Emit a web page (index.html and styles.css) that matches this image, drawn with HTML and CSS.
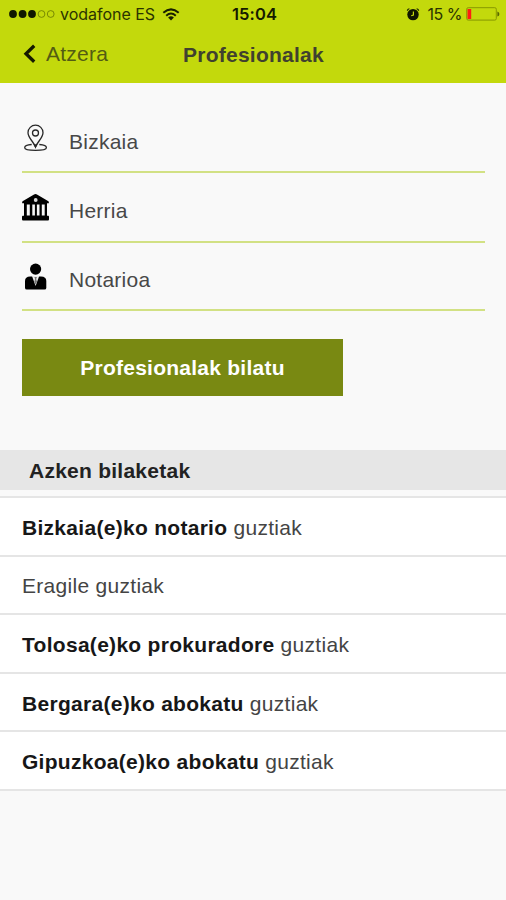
FILE: index.html
```html
<!DOCTYPE html>
<html lang="eu">
<head>
<meta charset="utf-8">
<title>Profesionalak</title>
<link rel="stylesheet" href="styles.css">
</head>
<body>
<header class="top">
  <div class="status">
    <div class="carrier">
      <svg class="signal" width="46" height="10" viewBox="0 0 46 10"><g fill="#111800"><circle cx="4" cy="5" r="3.9"/><circle cx="13.6" cy="5" r="3.9"/><circle cx="23" cy="5" r="3.9"/></g><g fill="none" stroke="#667600" stroke-width=".8"><circle cx="32.5" cy="5" r="3.4"/><circle cx="41.7" cy="5" r="3.4"/></g></svg>
      <span class="network">vodafone ES</span>
      <svg class="wifi" width="18" height="13" viewBox="0 0 18 13"><g fill="none" stroke="#182000" stroke-width="2"><path d="M1.3 4.7Q9-2 16.7 4.7"/><path d="M4.2 7.7Q9 3.4 13.8 7.7"/></g><path d="M6.1 9.4Q9 7.2 11.9 9.4L9 12.4z" fill="#182000"/></svg>
    </div>
    <div class="clock">15:04</div>
    <div class="power">
      <svg width="14" height="15" viewBox="0 0 14 15"><circle cx="7" cy="7.6" r="5.7" fill="#101600"/><path d="M1.3 3.8Q1.5 2 3.4 1.8M12.7 3.8Q12.5 2 10.6 1.8" fill="none" stroke="#101600" stroke-width="1.1"/><path d="M7.4 4.4V8L5.2 8.7" fill="none" stroke="#c3d90c" stroke-width="1.2"/></svg>
      <span class="percent">15 %</span>
      <svg width="34" height="14" viewBox="0 0 34 14"><rect x=".7" y=".7" width="29.6" height="12.4" rx="1.5" fill="none" stroke="#879800"/><path d="M1.5 2H5.2V12H1.5z" fill="#ff1d12"/><path d="M31.4 4.5Q33.4 5 33.4 7T31.4 9.5z" fill="#586600"/></svg>
    </div>
  </div>
  <nav class="nav">
    <div class="back"><svg width="14" height="20" viewBox="0 0 14 20"><path d="M12.2 1.7L4 9.7L12.2 17.7" fill="none" stroke="#151900" stroke-width="3.3"/></svg><span>Atzera</span></div>
    <h1>Profesionalak</h1>
  </nav>
</header>
<main>
  <section class="form">
    <div class="field first">
      <svg width="28" height="28" viewBox="0 0 28 28"><g fill="none" stroke="#292929" stroke-width="1.3"><path d="M13.5 23C11.8 18 6 13.8 6 8.7a7.5 7.5 0 0 1 15 0C21 13.8 15.2 18 13.5 23z"/><circle cx="13.5" cy="9" r="3"/><path d="M9.7 20.5C5 20.8 2.7 22.1 2.7 23.7C2.7 25.4 7 26.3 13.5 26.3S24.4 25.4 24.4 23.7C24.4 22.1 22 20.8 17.3 20.5"/></g><path d="M11.2 20.3L13.5 24L15.8 20.3z" fill="#292929"/></svg>
      <span>Bizkaia</span>
    </div>
    <div class="field second">
      <svg width="28" height="28" viewBox="0 0 28 28"><path d="M13.5 0Q14.3 0 15.4.8L26 7Q27.1 7.6 26.8 9.2H25V21.7H26.4Q27 21.8 27 23V25.2Q27 26.4 26 26.4H1Q0 26.4 0 25.2V23Q0 21.8.8 21.7H2V9.2H.2Q-.1 7.6 1 7L11.6.8Q12.8 0 13.5 0z" fill="#000"/><path d="M4.8 10.5H7.8V21.6H4.8zM10.3 10.5H12.9V21.6H10.3zM14.9 10.5H17.5V21.6H14.9zM19.8 10.5H22.7V21.6H19.8z" fill="#f5f5f5"/><circle cx="13.7" cy="6" r="1.9" fill="#d8d8d8"/></svg>
      <span>Herria</span>
    </div>
    <div class="field third">
      <svg width="28" height="28" viewBox="0 0 28 28"><circle cx="13.6" cy="7.1" r="5.6" fill="#000"/><path d="M3 25.7V19Q3 14.4 8.2 14.4H19Q24.3 14.4 24.3 19V25.7Q24.3 27.6 22.5 27.6H4.8Q3 27.6 3 25.7z" fill="#000"/><path d="M10 14H17.2L13.6 24z" fill="#eee"/><path d="M12.4 15H14.9L14.2 16.9L15 19.7L13.6 22.5L12.3 19.7L13.1 16.9z" fill="#777"/></svg>
      <span>Notarioa</span>
    </div>
    <button class="search">Profesionalak bilatu</button>
  </section>
  <h2>Azken bilaketak</h2>
  <ul class="recent">
    <li><span><b>Bizkaia(e)ko notario</b> guztiak</span></li>
    <li><span>Eragile guztiak</span></li>
    <li><span><b>Tolosa(e)ko prokuradore</b> guztiak</span></li>
    <li><span><b>Bergara(e)ko abokatu</b> guztiak</span></li>
    <li><span><b>Gipuzkoa(e)ko abokatu</b> guztiak</span></li>
  </ul>
</main>
</body>
</html>
```
FILE: styles.css
```css
* { box-sizing: border-box; }
body {
  margin: 0;
  min-height: 900px;
  background: #f9f9f9;
  color: #181818;
  font: 21px/24px "Liberation Sans", Arial, sans-serif;
  letter-spacing: .25px;
}
svg { display: block; flex: none; }
.top { height: 83px; background: #c3d90c; }
.status {
  height: 28px;
  display: grid;
  grid-template-columns: 1fr auto 1fr;
  align-items: center;
  padding: 0 6px 0 9px;
  font: 16px/20px Inter, sans-serif;
  color: #2b3300;
}
.carrier, .power { display: flex; align-items: center; }
.network { margin: 0 7px 0 5px; letter-spacing: -.02px; }
.clock { font-weight: 600; font-size: 16.5px; letter-spacing: .1px; color: #151b00; }
.power { justify-content: flex-end; }
.percent { margin: 0 4px 0 8px; letter-spacing: -.5px; }
.nav {
  height: 55px;
  display: grid;
  grid-template-columns: 1fr auto 1fr;
  align-items: center;
  padding: 0 0 3px 22px;
}
.back { display: flex; align-items: center; gap: 10px; color: #535c13; }
h1 { margin: 2px 21px 0 0; font-size: 21px; line-height: 24px; color: #40412f; }
.form { height: 367px; padding: 20px 21px 0 22px; }
.field {
  height: 69px;
  display: flex;
  align-items: center;
  gap: 19px;
  border-bottom: 2px solid #d2e184;
  color: #484848;
}
.field svg { margin-top: 1px; }
.field.third svg { margin: 0 0 1px; }
.field span { margin-top: 8px; }
.field.first { height: 70px; }
.field.first span { margin-top: 10px; }
.field.second { height: 70px; }
.field.second span { margin-top: 7px; }
.field.third { height: 68px; }
.search {
  display: block;
  width: 321px;
  height: 57px;
  margin-top: 28px;
  padding: 0;
  border: 0;
  background: #798912;
  color: #fff;
  font: bold 21px/24px "Liberation Sans", Arial, sans-serif;
  letter-spacing: .25px;
}
h2 {
  height: 40px;
  margin: 0 0 6px;
  padding: 9px 29px 0;
  background: #e6e6e6;
  font-size: 21px;
  line-height: 24px;
  color: #222;
}
.recent {
  list-style: none;
  margin: 0;
  padding: 0;
  border-top: 2px solid #e5e5e5;
  background: #fff;
}
.recent li {
  height: 58.6px;
  display: flex;
  align-items: center;
  padding: 3px 22px 0;
  border-bottom: 2px solid #e5e5e5;
  color: #444;
  letter-spacing: .29px;
}
.recent b { color: #171717; }
```
